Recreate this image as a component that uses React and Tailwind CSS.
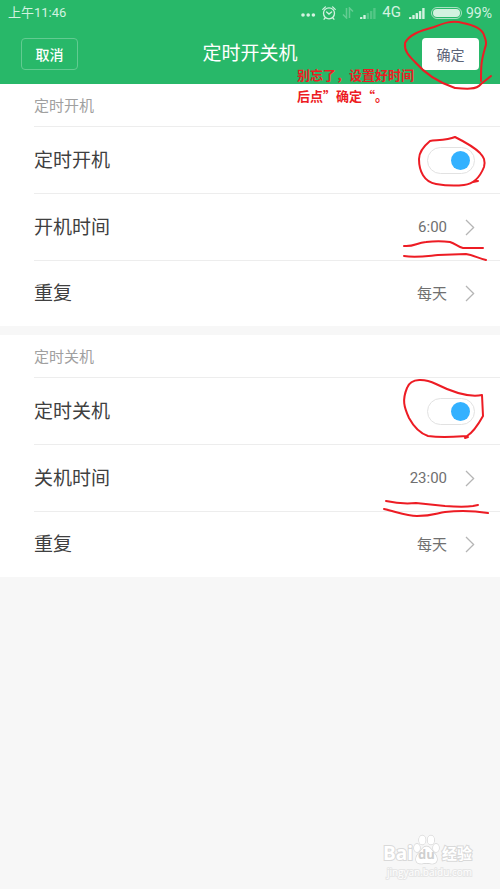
import { useState } from 'react';

const sections = [
  {
    title: '定时开机',
    rows: [
      { label: '开机时间', value: '6:00' },
      { label: '重复', value: '每天' },
    ],
  },
  {
    title: '定时关机',
    rows: [
      { label: '关机时间', value: '23:00' },
      { label: '重复', value: '每天' },
    ],
  },
];

function SignalIcon({ level = 5 }) {
  return (
    <svg width="16" height="12" viewBox="0 0 16 12" fill="currentColor">
      {[2, 4, 6, 8, 11].map((h, i) => (
        <rect
          key={i}
          x={i * 3.3}
          y={12 - h}
          width="2.4"
          height={h}
          rx="0.5"
          opacity={i < level ? 1 : 0.25}
        />
      ))}
    </svg>
  );
}

function StatusBar() {
  return (
    <div className="flex h-[26px] items-center justify-between px-2 text-sm text-[#d3f2e0]">
      <span className="text-[13px]">上午11:46</span>
      <div className="flex items-center">
        <svg width="15" height="4" viewBox="0 0 15 4" fill="currentColor" className="mt-1 mr-1.5">
          <circle cx="2" cy="2" r="1.8" />
          <circle cx="7.2" cy="2" r="1.8" />
          <circle cx="12.4" cy="2" r="1.8" />
        </svg>
        <svg
          width="14"
          height="14"
          viewBox="0 0 14 14"
          fill="none"
          stroke="currentColor"
          strokeWidth="1.3"
          strokeLinecap="round"
          className="mr-1.5"
        >
          <circle cx="7" cy="7.3" r="5.5" />
          <path d="M4.6 5.9 7 8.1l2.6-2.2M.8 3.4 3.4.9M13.2 3.4 10.6.9M3.1 12l-1 1.2M10.9 12l1 1.2" />
        </svg>
        <svg
          width="12"
          height="12"
          viewBox="0 0 12 12"
          fill="none"
          stroke="currentColor"
          strokeWidth="1.5"
          className="mr-1.5 opacity-35"
        >
          <path d="M4.5 1v10L1 7.5M7.5 11V1L11 4.5" />
        </svg>
        <SignalIcon level={2} />
        <span className="mr-2 ml-1.5 text-[15px]">4G</span>
        <span className="mr-1.5 flex">
          <SignalIcon />
        </span>
        <span className="mr-1 h-3 w-[31px] rounded-full border border-[#a9e2c2] p-px">
          <span className="block h-full rounded-full bg-[#d3f2e0]" />
        </span>
        <span>99%</span>
      </div>
    </div>
  );
}

function Header() {
  return (
    <header className="h-[84px] bg-[#28b869] text-white">
      <StatusBar />
      <div className="flex items-center justify-between px-[21px] pt-3">
        <button className="h-8 w-[57px] rounded border border-[#62cb91] pt-px text-sm font-medium">
          取消
        </button>
        <h1 className="text-[19px] leading-6">定时开关机</h1>
        <button className="h-8 w-[57px] rounded bg-white pt-px text-sm text-[#5c6478]">
          确定
        </button>
      </div>
    </header>
  );
}

function Chevron() {
  return (
    <svg
      width="10"
      height="17"
      viewBox="0 0 10 17"
      fill="none"
      stroke="#b5b5b5"
      strokeWidth="1.3"
      className="ml-[18px]"
    >
      <path d="M1 1l7.6 7.5L1 16" />
    </svg>
  );
}

function Section({ title, rows }) {
  const [on, setOn] = useState(true);

  return (
    <section className="bg-white pl-[34px]">
      <h2 className="h-[43px] border-b border-[#ededed] text-[15px] leading-[44px] text-[#a0a0a0]">
        {title}
      </h2>
      <label className="flex h-[67px] items-center justify-between border-b border-[#ededed] pr-[25px] text-[19px] text-[#404040]">
        <span className="pt-0.5">{title}</span>
        <input
          type="checkbox"
          checked={on}
          onChange={() => setOn(!on)}
          className="flex h-[27px] w-12 appearance-none items-center rounded-full border border-[#e2e2e2] bg-white px-1 before:block before:size-[19px] before:rounded-full before:bg-[#ccc] checked:justify-end checked:before:bg-[#33b1ff]"
        />
      </label>
      {rows.map((row) => (
        <button
          key={row.label}
          className="flex h-[67px] w-full items-center border-b border-[#ededed] pr-[25px] text-left last:h-[65px] last:border-b-0"
        >
          <span className="flex-1 pt-0.5 text-[19px] text-[#404040]">{row.label}</span>
          <span className="pt-px text-[15px] text-[#707070]">{row.value}</span>
          <Chevron />
        </button>
      ))}
    </section>
  );
}

// Hand-drawn red marks, anchored to the right edge where the controls sit
function Annotations() {
  return (
    <div className="pointer-events-none absolute top-0 right-0 w-[210px]">
      <svg
        width="210"
        height="530"
        viewBox="290 0 210 530"
        fill="none"
        stroke="#ed1c24"
        strokeWidth="2"
        strokeLinecap="round"
        strokeLinejoin="round"
      >
        <path d="M481 81 C481 66 481 62 485 48 C488 41 484 37 484 35 C482 29 473 25 463 23 C452 20 444 23 434 27 C419 31 409 35 405 43 C404 51 409 56 415 62 C427 76 443 84 455 88 C466 89 476 90 481 84 L491 76" />
        <path d="M455 137 C448 140 438 140 430 141 C424 146 419 152 419 159 C419 171 424 182 436 184 C448 186 455 186 464 185 C474 184 480 177 484 167 C486 158 482 156 480 153 C474 147 463 141 455 137M473 182l5-1" />
        <path d="M404 246 C414 247 416 243 426 242 C434 241 443 241 450 242 C456 244 458 247 463 248 L483 248" />
        <path d="M404 256 C416 258 427 256 438 255 L466 254 C473 255 478 258 486 260" />
        <path d="M482 395 C467 398 448 390 436 384 C426 379 411 377 407 388 C402 400 404 407 409 418 C415 429 422 434 428 436 C442 438 452 437 467 436 C472 433 478 425 483 416 L482 395M465 438l3-1" />
        <path d="M386 501 C395 503 405 504 416 503 L445 506 C459 507 466 507 473 506 L478 505" />
        <path d="M384 509 C397 512 407 516 417 516 C433 516 437 513 445 512 C461 510 476 511 488 513" />
      </svg>
      <p className="absolute top-16 left-[7px] font-['Noto_Sans_CJK_SC',sans-serif] text-[13px] leading-[21px] font-bold whitespace-nowrap text-[#ed1c24]">
        别忘了，设置好时间
        <br />
        后点”确定“。
      </p>
    </div>
  );
}

function Watermark() {
  return (
    <footer className="mt-auto flex flex-col items-end pr-7 pb-[10px] font-['Open_Sans','Noto_Sans_CJK_SC',sans-serif] text-white [paint-order:stroke_fill] [-webkit-text-stroke:2px_#d9d9d9]">
      <div className="flex h-8 items-end text-[19px] leading-6 font-bold">
        <span>Bai</span>
        <span className="relative flex w-[27px] justify-center text-[13px] leading-[22px]">
          <svg
            width="27"
            height="31"
            viewBox="0 0 27 31"
            fill="#fff"
            stroke="#d4d4d4"
            strokeWidth="1.3"
            className="absolute bottom-0 left-0"
          >
            <path d="M13.5 12.5c4 0 5 4 8 7s4 9-1 10c-3 .6-4-.5-7-.5s-4 1-7 .5c-5-1-4-7-1-10s4-7 8-7z" />
            <ellipse cx="9.3" cy="6" rx="3.3" ry="4.5" />
            <ellipse cx="17.9" cy="6" rx="3.3" ry="4.5" />
            <ellipse cx="4" cy="14" rx="3" ry="4" />
            <ellipse cx="23" cy="14" rx="3" ry="4" />
          </svg>
          <span className="relative text-[#cfcfcf] [-webkit-text-stroke:0]">du</span>
        </span>
        <span className="ml-0.5 text-[15px]">经验</span>
      </div>
      <span className="text-[10px] leading-[14px] [-webkit-text-stroke:2px_#e6e6e6]">
        jingyan.baidu.com
      </span>
    </footer>
  );
}

export default function App() {
  return (
    <div className="relative flex min-h-screen flex-col bg-[#f7f7f7] font-[Roboto,'Noto_Sans_CJK_SC',sans-serif]">
      <Header />
      <main className="flex flex-col gap-[9px]">
        {sections.map((s) => (
          <Section key={s.title} {...s} />
        ))}
      </main>
      <Annotations />
      <Watermark />
    </div>
  );
}
